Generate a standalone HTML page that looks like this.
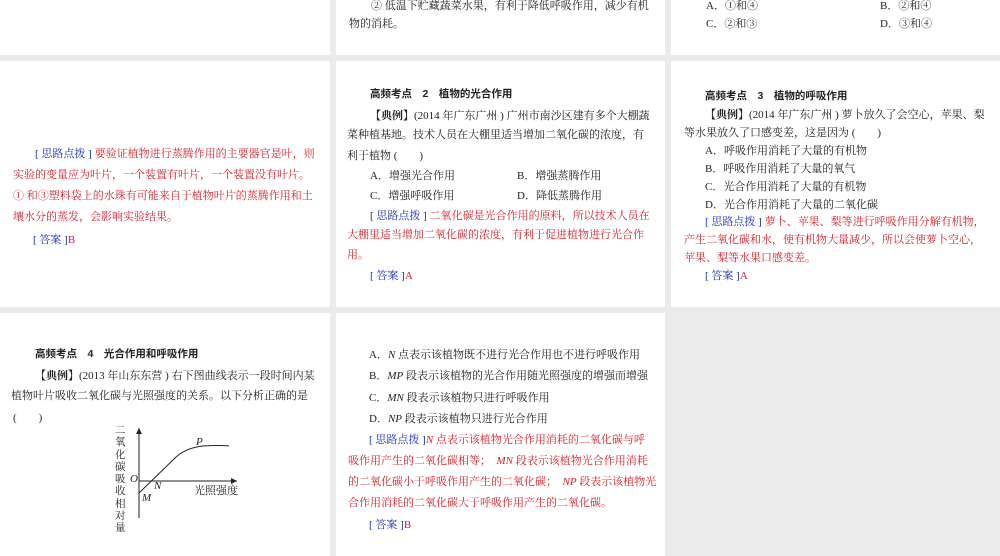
<!DOCTYPE html>
<html><head><meta charset="utf-8"><style>
body{margin:0;width:1000px;height:556px;background:#ebebeb;position:relative;overflow:hidden;font-family:"Liberation Serif","Noto Serif CJK SC",serif;font-size:11px;color:#222}
.c{position:absolute;background:#fff;overflow:hidden}
.t{position:absolute;white-space:nowrap}
.h{font-family:"Liberation Sans","Noto Sans CJK SC",sans-serif;font-weight:bold;font-size:10.5px}
.r{color:#d0202a}
.b{color:#1a2fb0}
.rr{color:#d0202a}
</style></head><body>
<div class="c" style="left:0;top:0;width:330px;height:55px"></div>
<div class="c" style="left:336px;top:0;width:329px;height:55px">
<div class="t" style="left:35px;top:-3px">② 低温下贮藏蔬菜水果，有利于降低呼吸作用，减少有机</div>
<div class="t" style="left:13px;top:15px">物的消耗。</div></div>
<div class="c" style="left:671px;top:0;width:329px;height:55px">
<div class="t" style="left:35px;top:-3px">A．①和④</div><div class="t" style="left:209px;top:-3px">B．②和④</div>
<div class="t" style="left:35px;top:15px">C．②和③</div><div class="t" style="left:209px;top:15px">D．③和④</div></div>

<div class="c" style="left:0;top:61px;width:330px;height:246px">
<div class="t r" style="left:35px;top:84px"><span class="b">[ 思路点拨 ]</span> 要验证植物进行蒸腾作用的主要器官是叶，则</div>
<div class="t r" style="left:13px;top:105px">实验的变量应为叶片，一个装置有叶片，一个装置没有叶片。</div>
<div class="t r" style="left:13px;top:126px">① 和③塑料袋上的水珠有可能来自于植物叶片的蒸腾作用和土</div>
<div class="t r" style="left:13px;top:147px">壤水分的蒸发，会影响实验结果。</div>
<div class="t" style="left:33px;top:170px"><span class="b">[ 答案 ]</span><span class="rr">B</span></div></div>

<div class="c" style="left:336px;top:61px;width:329px;height:246px">
<div class="t h" style="left:34px;top:25px">高频考点　2　植物的光合作用</div>
<div class="t" style="left:34px;top:46px"><b>【典例】</b>(2014 年广东广州 ) 广州市南沙区建有多个大棚蔬</div>
<div class="t" style="left:11px;top:65px">菜种植基地。技术人员在大棚里适当增加二氧化碳的浓度，有</div>
<div class="t" style="left:11px;top:86px">利于植物 (　　)</div>
<div class="t" style="left:34px;top:106px">A．增强光合作用</div><div class="t" style="left:181px;top:106px">B．增强蒸腾作用</div>
<div class="t" style="left:34px;top:126px">C．增强呼吸作用</div><div class="t" style="left:181px;top:126px">D．降低蒸腾作用</div>
<div class="t r" style="left:34px;top:146px"><span class="b">[ 思路点拨 ]</span> 二氧化碳是光合作用的原料，所以技术人员在</div>
<div class="t r" style="left:11px;top:165px">大棚里适当增加二氧化碳的浓度，有利于促进植物进行光合作</div>
<div class="t r" style="left:11px;top:185px">用。</div>
<div class="t" style="left:34px;top:206px"><span class="b">[ 答案 ]</span><span class="rr">A</span></div></div>

<div class="c" style="left:671px;top:61px;width:329px;height:246px">
<div class="t h" style="left:34px;top:27px">高频考点　3　植物的呼吸作用</div>
<div class="t" style="left:34px;top:45px"><b>【典例】</b>(2014 年广东广州 ) 萝卜放久了会空心，苹果、梨</div>
<div class="t" style="left:13px;top:63px">等水果放久了口感变差，这是因为 (　　)</div>
<div class="t" style="left:34px;top:81px">A．呼吸作用消耗了大量的有机物</div>
<div class="t" style="left:34px;top:99px">B．呼吸作用消耗了大量的氧气</div>
<div class="t" style="left:34px;top:117px">C．光合作用消耗了大量的有机物</div>
<div class="t" style="left:34px;top:135px">D．光合作用消耗了大量的二氧化碳</div>
<div class="t r" style="left:34px;top:152px"><span class="b">[ 思路点拨 ]</span> 萝卜、苹果、梨等进行呼吸作用分解有机物，</div>
<div class="t r" style="left:13px;top:170px">产生二氧化碳和水，使有机物大量减少，所以会使萝卜空心，</div>
<div class="t r" style="left:13px;top:188px">苹果、梨等水果口感变差。</div>
<div class="t" style="left:34px;top:206px"><span class="b">[ 答案 ]</span><span class="rr">A</span></div></div>

<div class="c" style="left:0;top:313px;width:330px;height:243px">
<div class="t h" style="left:35px;top:33px">高频考点　4　光合作用和呼吸作用</div>
<div class="t" style="left:35px;top:54px"><b>【典例】</b>(2013 年山东东营 ) 右下图曲线表示一段时间内某</div>
<div class="t" style="left:11px;top:74px">植物叶片吸收二氧化碳与光照强度的关系。以下分析正确的是</div>
<div class="t" style="left:13px;top:96px">(　　)</div>
<div class="t" style="left:115px;top:112px;width:12px;white-space:normal;line-height:12.3px;font-size:10.5px">二氧化碳吸收相对量</div>
<svg style="position:absolute;left:125px;top:115px" width="120" height="90">
<path d="M14 0 V90 M14 53 H112" stroke="#222" fill="none"/>
<path d="M11 6 L14 0 L17 6Z M106 50 L112 53 L106 56Z" fill="#222"/>
<path d="M14 65 L50 30 Q60 20 78 18 Q95 17 104 18" stroke="#222" fill="none"/>
</svg>
<div class="t" style="left:130px;top:160px;font-style:italic">O</div>
<div class="t" style="left:154px;top:167px;font-style:italic">N</div>
<div class="t" style="left:142px;top:179px;font-style:italic">M</div>
<div class="t" style="left:196px;top:123px;font-style:italic">P</div>
<div class="t" style="left:194px;top:169px">光照强度</div></div>

<div class="c" style="left:336px;top:313px;width:329px;height:243px">
<div class="t" style="left:33px;top:33px">A．<i>N</i> 点表示该植物既不进行光合作用也不进行呼吸作用</div>
<div class="t" style="left:33px;top:54px">B．<i>MP</i> 段表示该植物的光合作用随光照强度的增强而增强</div>
<div class="t" style="left:33px;top:76px">C．<i>MN</i> 段表示该植物只进行呼吸作用</div>
<div class="t" style="left:33px;top:97px">D．<i>NP</i> 段表示该植物只进行光合作用</div>
<div class="t r" style="left:33px;top:118px"><span class="b">[ 思路点拨 ]</span><i>N</i> 点表示该植物光合作用消耗的二氧化碳与呼</div>
<div class="t r" style="left:12px;top:139px">吸作用产生的二氧化碳相等；　<i>MN</i> 段表示该植物光合作用消耗</div>
<div class="t r" style="left:12px;top:160px">的二氧化碳小于呼吸作用产生的二氧化碳；　<i>NP</i> 段表示该植物光</div>
<div class="t r" style="left:12px;top:181px">合作用消耗的二氧化碳大于呼吸作用产生的二氧化碳。</div>
<div class="t" style="left:33px;top:203px"><span class="b">[ 答案 ]</span><span class="rr">B</span></div></div>
</body></html>
